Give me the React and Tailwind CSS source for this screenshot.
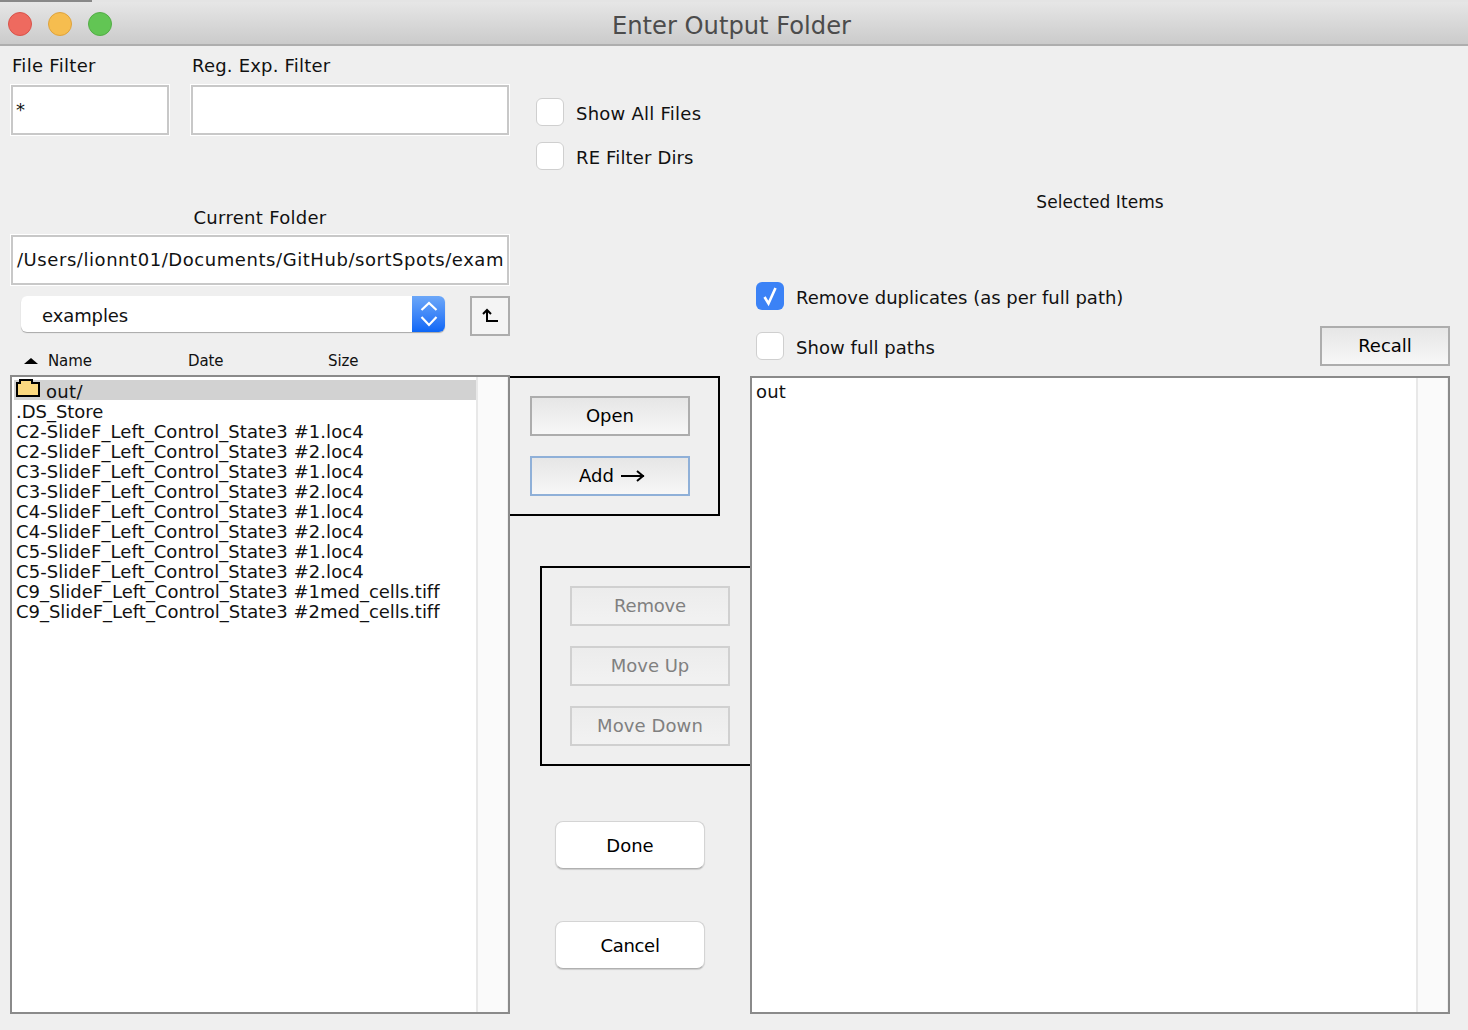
const files = [
  '.DS_Store',
  'C2-SlideF_Left_Control_State3 #1.loc4',
  'C2-SlideF_Left_Control_State3 #2.loc4',
  'C3-SlideF_Left_Control_State3 #1.loc4',
  'C3-SlideF_Left_Control_State3 #2.loc4',
  'C4-SlideF_Left_Control_State3 #1.loc4',
  'C4-SlideF_Left_Control_State3 #2.loc4',
  'C5-SlideF_Left_Control_State3 #1.loc4',
  'C5-SlideF_Left_Control_State3 #2.loc4',
  'C9_SlideF_Left_Control_State3 #1med_cells.tiff',
  'C9_SlideF_Left_Control_State3 #2med_cells.tiff',
];

function Light({ color }) {
  return <span className={`w-6 h-6 rounded-full border ${color}`} />;
}

function SquareButton({ label, focus, disabled, className = '', children }) {
  const border = disabled ? 'border-[#d0d0d0] text-[#808080]' : focus ? 'border-[#8fb0d8] text-black' : 'border-[#adadad] text-black';
  const bg = disabled ? 'from-[#ececec] to-[#f2f2f2]' : 'from-[#e6e6e6] to-[#f7f7f7]';
  return (
    <button className={`flex items-center justify-center h-10 border-2 bg-gradient-to-b ${bg} ${border} ${className}`}>
      {label}
      {children}
    </button>
  );
}

function RoundButton({ label, className = '' }) {
  return (
    <button className={`w-[150px] h-12 ml-[45px] pt-[2px] rounded-lg bg-white border border-[#d4d4d4] border-b-[#b0b0b0] shadow-[0_1px_1px_rgba(0,0,0,0.15)] text-black ${className}`}>
      {label}
    </button>
  );
}

function Checkbox({ checked, label, className = '' }) {
  return (
    <label className={`flex items-center gap-3 ${className}`}>
      {checked ? (
        <span className="flex items-center justify-center w-7 h-7 rounded-md bg-[#3b82f6]">
          <svg width="20" height="22" viewBox="0 0 20 22" fill="none" stroke="white" strokeWidth="2.6">
            <path d="M4.5 12l4 6.5L15.5 3" />
          </svg>
        </span>
      ) : (
        <span className="w-7 h-7 rounded-md bg-white border border-[#cfcfcf]" />
      )}
      <span className="pt-[4px]">{label}</span>
    </label>
  );
}

function TextBox({ className = '', children }) {
  return (
    <div className={`h-[50px] flex items-center bg-white border-2 border-[#c8c8c8] outline-1 outline-white ${className}`}>
      {children}
    </div>
  );
}

export default function App() {
  return (
    <div className="w-[1468px] h-[1030px] overflow-hidden flex flex-col bg-[#efefef] text-[18px] leading-5 text-[#111] font-['DejaVu_Sans',sans-serif]">
      {/* title bar */}
      <header className="relative h-[46px] shrink-0 flex items-center border-t-2 border-b-2 border-t-[#e4e4e4] border-b-[#aeaeae] bg-gradient-to-b from-[#e6e6e6] to-[#cbcbcb]">
        <span className="absolute left-0 -top-[2px] w-[92px] h-[2px] bg-[#888]" />
        <div className="flex gap-4 ml-2 mt-[2px]">
          <Light color="bg-[#ee6a5f] border-[#d9534a]" />
          <Light color="bg-[#f6bd4f] border-[#dfa33c]" />
          <Light color="bg-[#62c554] border-[#53ad46]" />
        </div>
        <h1 className="absolute left-0 right-[5px] pt-[5px] text-center text-[24.2px] text-[#4c4c4c]">
          Enter Output Folder
        </h1>
      </header>

      <main className="flex flex-1 min-h-0">
        {/* left column */}
        <section className="w-[510px] shrink-0 pl-[10px] flex flex-col">
          <div className="flex gap-[22px] pl-px pt-[10px]">
            <div className="w-[158px]">
              <div className="h-5 pl-px mb-[9px] tracking-[0.3px]">File Filter</div>
              <TextBox className="pl-[3px]">*</TextBox>
            </div>
            <div className="w-[318px]">
              <div className="h-5 pl-px mb-[9px] tracking-[0.2px]">Reg. Exp. Filter</div>
              <TextBox />
            </div>
          </div>
          <div className="mt-[73px] mb-[7px] h-5 text-center tracking-[0.3px]">Current Folder</div>
          <TextBox className="ml-px w-[498px] pl-[4px] whitespace-nowrap tracking-[0.56px]">/Users/lionnt01/Documents/GitHub/sortSpots/exam</TextBox>

          <div className="flex mt-[11px] ml-[11px] h-10">
            <div className="w-[424px] h-[36px] flex items-center justify-between rounded-md bg-white shadow-[0_1px_1px_rgba(0,0,0,0.3)] overflow-hidden">
              <span className="pl-[21px] pt-[4px] tracking-[-0.1px]">examples</span>
              <span className="w-[33px] h-full flex items-center justify-center bg-gradient-to-b from-[#6ca7f8] to-[#0b66f6]">
                <svg width="18" height="28" viewBox="0 0 18 28" fill="none" stroke="white" strokeWidth="2.2">
                  <path d="M1.5 10l7.5-7 7.5 7M1.5 17l7.5 8 7.5-8" />
                </svg>
              </span>
            </div>
            <button className="ml-[25px] w-10 h-10 flex items-center justify-center border-2 border-[#adadad] bg-[#f4f4f4]">
              <svg width="18" height="16" viewBox="0 0 18 16" fill="none" stroke="black" strokeWidth="2">
                <path d="M2 6l4-4 4 4M6 2v11h11" />
              </svg>
            </button>
          </div>

          <div className="flex items-center h-[39px] pt-[10px] text-[15px] tracking-[-0.1px]">
            <svg className="ml-[13px]" width="16" height="8" viewBox="0 0 16 8"><path d="M1 7l7-6 7 6z" fill="black" /></svg>
            <span className="ml-[9px] w-[140px]">Name</span>
            <span className="w-[140px]">Date</span>
            <span>Size</span>
          </div>

          <div className="flex-1 mb-4 flex bg-white border-2 border-[#8a8a8a]">
            <ul className="flex-1 min-w-0 pt-[3px] pl-[2px] whitespace-nowrap">
              <li className="h-5 flex items-start pl-[2px] leading-[24px] tracking-[0.3px] bg-[#d2d2d2]">
                <svg className="mr-[6px] -mt-px" width="24" height="18" viewBox="0 0 24 18">
                  <path d="M1 4h3V1h12v3h7v13H1z" fill="#fbd87f" stroke="black" strokeWidth="2" />
                </svg>
                out/
              </li>
              {files.map((f) => (
                <li key={f} className={`h-5 pl-[2px] leading-[24px] ${f.endsWith('.loc4') ? 'tracking-[0.07px]' : 'tracking-[-0.02px]'}`}>{f}</li>
              ))}
            </ul>
            <div className="w-[32px] shrink-0 bg-[#fafafa] border-l-2 border-r border-l-[#e8e8e8] border-r-[#efefef]" />
          </div>
        </section>

        {/* middle column */}
        <section className="w-[240px] shrink-0 relative flex flex-col">
          <Checkbox className="ml-[26px] mt-[52px] tracking-[0.25px]" label="Show All Files" />
          <Checkbox className="ml-[26px] mt-4 tracking-[0.15px]" label="RE Filter Dirs" />

          <div className="mt-[206px] w-[210px] h-[140px] border-2 border-l-0 border-black flex flex-col gap-5 pl-5 pt-[18px]">
            <SquareButton label="Open" className="w-40" />
            <SquareButton label="Add" focus className="w-40 pl-[4px]">
              <svg className="ml-[7px]" width="24" height="14" viewBox="0 0 24 14" fill="none" stroke="black" strokeWidth="2">
                <path d="M0 7h23M16 2l6 5-6 5" />
              </svg>
            </SquareButton>
          </div>

          <div className="mt-[50px] ml-[30px] h-[200px] border-2 border-r-0 border-black flex flex-col gap-5 pl-7 pt-[18px]">
            <SquareButton label="Remove" disabled className="w-40 tracking-[-0.2px]" />
            <SquareButton label="Move Up" disabled className="w-40" />
            <SquareButton label="Move Down" disabled className="w-40 tracking-[0.1px]" />
          </div>

          <div className="mt-[55px]"><RoundButton label="Done" /></div>
          <div className="mt-[52px]"><RoundButton label="Cancel" className="tracking-[-0.3px]" /></div>
        </section>

        {/* right column */}
        <section className="w-[700px] shrink-0 flex flex-col">
          <div className="mt-[146px] h-5 text-center text-[17px] tracking-[0.05px]">Selected Items</div>
          <Checkbox checked className="ml-[6px] mt-[70px] h-7" label="Remove duplicates (as per full path)" />
          <div className="flex justify-between items-start h-[50px] mt-4">
            <Checkbox className="ml-[6px] mt-[6px] tracking-[0.05px]" label="Show full paths" />
            <SquareButton label="Recall" className="w-[130px]" />
          </div>
          <div className="flex-1 mb-4 flex bg-white border-2 border-[#8a8a8a]">
            <div className="flex-1 pl-[4px] pt-[4px] tracking-[0.2px]">out</div>
            <div className="w-[32px] shrink-0 bg-[#fafafa] border-l-2 border-r border-l-[#e8e8e8] border-r-[#efefef]" />
          </div>
        </section>
      </main>
    </div>
  );
}
